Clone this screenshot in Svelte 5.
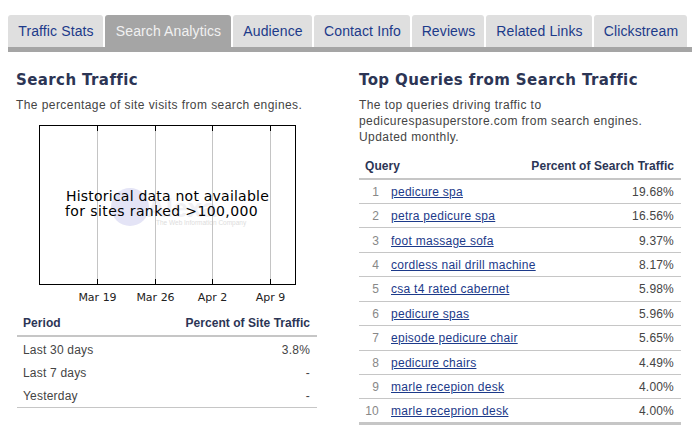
<script>
	const tabs = [
		{ label: 'Traffic Stats', width: 95 },
		{ label: 'Search Analytics', width: 126, active: true },
		{ label: 'Audience', width: 79 },
		{ label: 'Contact Info', width: 96 },
		{ label: 'Reviews', width: 72 },
		{ label: 'Related Links', width: 106 },
		{ label: 'Clickstream', width: 93 }
	];

	const periods = [
		['Last 30 days', '3.8%'],
		['Last 7 days', '-'],
		['Yesterday', '-']
	];

	const queries = [
		['pedicure spa', '19.68%'],
		['petra pedicure spa', '16.56%'],
		['foot massage sofa', '9.37%'],
		['cordless nail drill machine', '8.17%'],
		['csa t4 rated cabernet', '5.98%'],
		['pedicure spas', '5.96%'],
		['episode pedicure chair', '5.65%'],
		['pedicure chairs', '4.49%'],
		['marle recepion desk', '4.00%'],
		['marle receprion desk', '4.00%']
	];

	const ticks = [
		{ x: 58, label: 'Mar 19' },
		{ x: 116, label: 'Mar 26' },
		{ x: 173, label: 'Apr 2' },
		{ x: 231, label: 'Apr 9' }
	];
</script>

<div class="page">
	<nav class="tabs">
		{#each tabs as tab}
			<a class="tab" class:active={tab.active} style="width: {tab.width}px" href="#top">{tab.label}</a>
		{/each}
	</nav>

	<div class="columns">
		<section class="left">
			<h2>Search Traffic</h2>
			<p>The percentage of site visits from search engines.</p>

			<svg class="chart" width="260" height="178" viewBox="0 0 260 178">
				<circle cx="91" cy="82" r="19" fill="#e4e4f6" />
				<text class="logo" x="108" y="92">Alexa</text>
				<text class="mark" x="117" y="100">The Web Information Company</text>
				{#each ticks as tick}
					<line x1={tick.x + 0.5} x2={tick.x + 0.5} y1="1" y2="159" stroke="#c4c4c4" />
					<line x1={tick.x + 0.5} x2={tick.x + 0.5} y1="1" y2="6" stroke="#000" />
					<line x1={tick.x + 0.5} x2={tick.x + 0.5} y1="154" y2="159" stroke="#000" />
					<text class="tick" x={tick.x + 0.5} y="176" text-anchor="middle">{tick.label}</text>
				{/each}
				<rect x="0.5" y="0.5" width="256" height="159" fill="none" stroke="#000" />
				<text class="note" x="27" y="76">Historical data not available</text>
				<text class="note wide" x="26" y="91">for sites ranked &gt;100,000</text>
			</svg>

			<table class="period">
				<thead>
					<tr><th>Period</th><th class="num">Percent of Site Traffic</th></tr>
				</thead>
				<tbody>
					{#each periods as row}
						<tr><td>{row[0]}</td><td class="num">{row[1]}</td></tr>
					{/each}
				</tbody>
			</table>
		</section>

		<section class="right">
			<h2>Top Queries from Search Traffic</h2>
			<p>The top queries driving traffic to<br />pedicurespasuperstore.com from search engines.<br />Updated monthly.</p>

			<table class="queries">
				<colgroup>
					<col class="rank-col" />
					<col />
					<col class="pct-col" />
				</colgroup>
				<thead>
					<tr>
						<th colspan="2">Query</th>
						<th class="num">Percent of Search Traffic</th>
					</tr>
				</thead>
				<tbody>
					{#each queries as row, i}
						<tr>
							<td class="rank">{i + 1}</td>
							<td class="query"><a href="#top">{row[0]}</a></td>
							<td class="num">{row[1]}</td>
						</tr>
					{/each}
				</tbody>
			</table>
		</section>
	</div>
</div>

<style>
	:global(body) {
		background: #fff;
	}

	.page {
		width: 695px;
		height: 439px;
		overflow: hidden;
		font-family: 'Liberation Sans', Arial, sans-serif;
		font-size: 12px;
		color: #444;
	}

	.tabs {
		display: flex;
		gap: 2px;
		width: 684px;
		margin: 15px 0 0 8px;
		border-bottom: 5px solid #a5a5a5;
	}

	.tab {
		box-sizing: border-box;
		height: 32px;
		padding-left: 1px;
		line-height: 32px;
		text-align: center;
		font-size: 14px;
		letter-spacing: 0.12px;
		color: #1c3a8a;
		text-decoration: none;
		background: #dfdfdf;
		border-radius: 3px 3px 0 0;
	}

	.tab.active {
		background: #a5a5a5;
		color: #f1f1f1;
	}

	.columns {
		display: flex;
		margin-top: 18px;
	}

	.left {
		width: 359px;
		padding-left: 16px;
		box-sizing: border-box;
	}

	.right {
		width: 322px;
	}

	h2 {
		margin: 0;
		font-family: 'DejaVu Sans', Verdana, sans-serif;
		font-size: 15px;
		line-height: 20px;
		font-weight: 700;
		letter-spacing: 0.4px;
		color: #2c3555;
	}

	p {
		margin: 7px 0 0;
		line-height: 16px;
		letter-spacing: 0.43px;
	}

	.chart {
		display: block;
		margin: 12px 0 0 23px;
	}

	.note {
		font-family: 'DejaVu Sans', Verdana, sans-serif;
		font-size: 14px;
		letter-spacing: 0.22px;
		fill: #000;
	}

	.note.wide {
		letter-spacing: 0.4px;
	}

	.tick {
		font-family: 'DejaVu Sans', Verdana, sans-serif;
		font-size: 11px;
		fill: #222;
	}

	.logo {
		font-family: 'Liberation Sans', Arial, sans-serif;
		font-size: 26px;
		font-weight: 700;
		fill: #f0f0f4;
	}

	.mark {
		font-family: 'Liberation Sans', Arial, sans-serif;
		font-size: 6.5px;
		fill: #ddd;
	}

	table {
		border-collapse: collapse;
		letter-spacing: 0.2px;
	}

	th {
		text-align: left;
		font-weight: 700;
		letter-spacing: 0.05px;
		color: #2c3555;
		padding: 0 7px 0 6px;
	}

	.num {
		text-align: right;
	}

	.period {
		width: 300px;
		margin: 8px 0 0 1px;
	}

	.period th {
		height: 24px;
		border-bottom: 2px solid #c6c6c6;
	}

	.period td {
		height: 23px;
		padding: 0 7px 0 6px;
	}

	.period tbody tr:first-child td {
		padding-top: 1px;
	}

	.period tbody tr:last-child td {
		border-bottom: 1px solid #c6c6c6;
	}

	.queries {
		width: 322px;
		margin-top: 8px;
		table-layout: fixed;
	}

	.rank-col {
		width: 32px;
	}

	.pct-col {
		width: 160px;
	}

	.queries th {
		height: 25px;
		border-bottom: 2px solid #c6c6c6;
	}

	.queries td {
		height: 24.45px;
		padding: 1px 7px 0 0;
		border-bottom: 1px solid #c6c6c6;
		box-sizing: border-box;
	}

	.queries td.query {
		white-space: nowrap;
	}

	.queries td.rank {
		padding-right: 12px;
		text-align: right;
		color: #888;
	}

	.queries tbody tr:last-child td {
		border-bottom: 3px solid #c6c6c6;
	}

	.queries a {
		letter-spacing: 0.27px;
		color: #1c3a8a;
	}
</style>
